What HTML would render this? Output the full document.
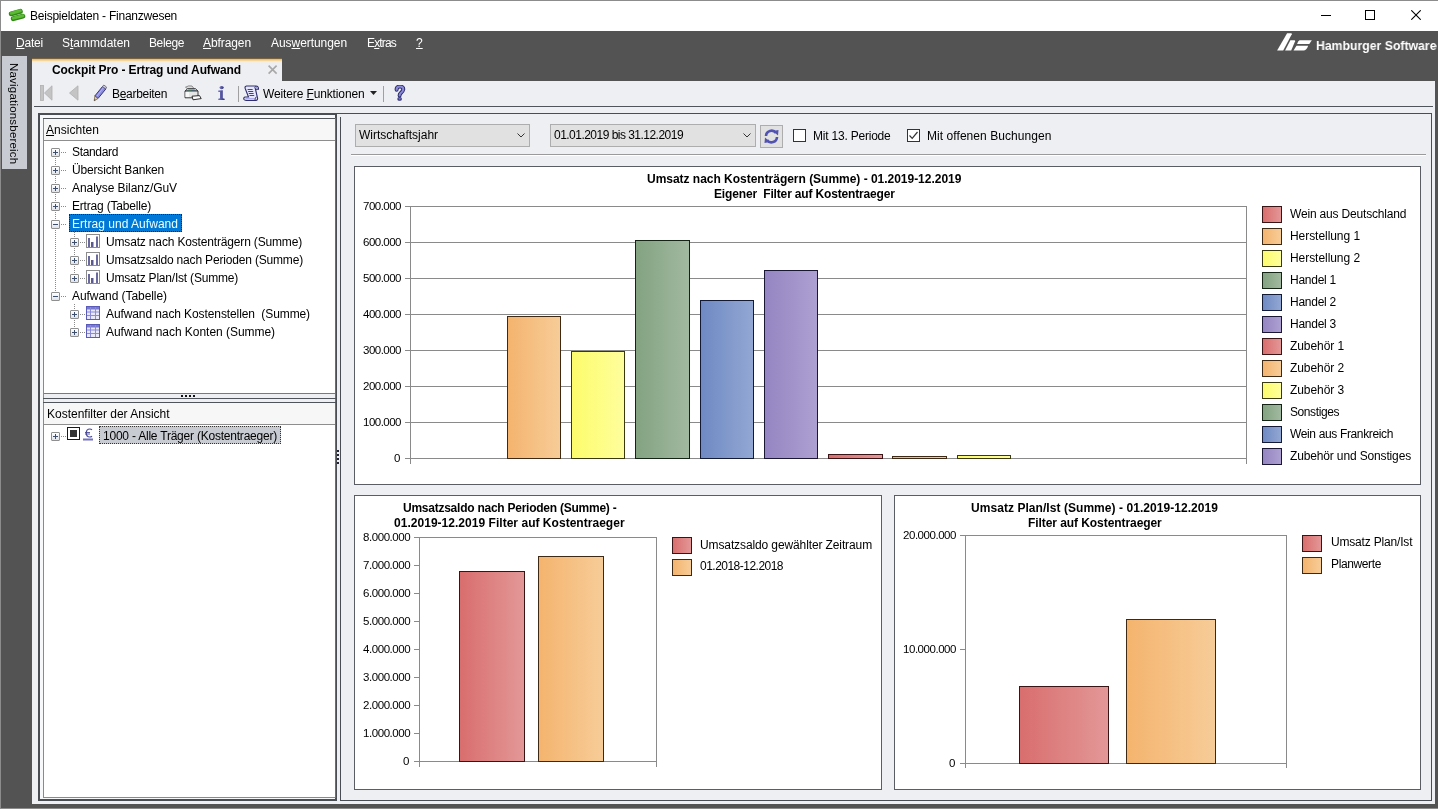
<!DOCTYPE html><html><head><meta charset="utf-8"><style>
*{margin:0;padding:0;box-sizing:border-box}
html,body{width:1438px;height:809px;overflow:hidden;background:#535353;font-family:"Liberation Sans",sans-serif}
div,svg{position:absolute}
.t{white-space:pre;will-change:transform}
u{text-decoration:underline;text-underline-offset:1px}
</style></head><body>
<div style="left:0px;top:0px;width:1438px;height:809px;background:#535353;"></div>
<div style="left:0px;top:0px;width:1438px;height:31px;background:#ffffff;"></div>
<div style="left:0px;top:0px;width:1438px;height:1px;background:#8c8c8c;"></div>
<div style="left:0px;top:0px;width:1px;height:809px;background:#8c8c8c;"></div>
<div style="left:0px;top:808px;width:1438px;height:1px;background:#8c8c8c;"></div>
<svg style="left:4px;top:4px" width="24" height="20" viewBox="0 0 24 20"><path d="M7.3 9.8 L16.3 7.3" stroke="#2f8a14" stroke-width="5" stroke-linecap="round"/><path d="M7.3 9.3 L16.3 6.8" stroke="#5cba34" stroke-width="3" stroke-linecap="round"/><path d="M9.3 14.6 L18.8 12.2" stroke="#2f8a14" stroke-width="5" stroke-linecap="round"/><path d="M9.3 14.1 L18.8 11.7" stroke="#5cba34" stroke-width="3" stroke-linecap="round"/></svg>
<div class="t" style="left:30.00px;top:10.04px;font-size:12px;line-height:12px;color:#000;letter-spacing:-0.237px;">Beispieldaten - Finanzwesen</div>
<div style="left:1321px;top:15px;width:10px;height:1px;background:#000;"></div>
<div style="left:1365px;top:10px;width:10px;height:10px;border:1px solid #000"></div>
<svg style="left:1411px;top:10px" width="10" height="10" viewBox="0 0 10 10"><path d="M0.3 0.3L9.7 9.7M9.7 0.3L0.3 9.7" stroke="#000" stroke-width="1.1"/></svg>
<div class="t" style="left:16.00px;top:36.64px;font-size:12px;line-height:12px;color:#fff;letter-spacing:-0.202px;"><u>D</u>atei</div>
<div class="t" style="left:62.00px;top:36.64px;font-size:12px;line-height:12px;color:#fff;letter-spacing:-0.003px;">S<u>t</u>ammdaten</div>
<div class="t" style="left:149.00px;top:36.64px;font-size:12px;line-height:12px;color:#fff;letter-spacing:-0.394px;">Bele<u>g</u>e</div>
<div class="t" style="left:203.00px;top:36.64px;font-size:12px;line-height:12px;color:#fff;letter-spacing:-0.087px;"><u>A</u>bfragen</div>
<div class="t" style="left:271.00px;top:36.64px;font-size:12px;line-height:12px;color:#fff;letter-spacing:-0.059px;">Aus<u>w</u>ertungen</div>
<div class="t" style="left:367.00px;top:36.64px;font-size:12px;line-height:12px;color:#fff;letter-spacing:-0.834px;">E<u>x</u>tras</div>
<div class="t" style="left:416.00px;top:36.64px;font-size:12px;line-height:12px;color:#fff;"><u>?</u></div>
<svg style="left:1274px;top:31px" width="40" height="22" viewBox="0 0 40 22"><path d="M3.1 19.5 L9.2 19.5 L17.8 3.2 Q18.2 2.2 17 2.2 L13.1 2.2Z" fill="#fff"/><path d="M11.1 19.5 L17.2 19.5 L21.1 10.2 Q21.4 9.2 20.3 9.2 L16.4 9.2Z" fill="#fff"/><path d="M25.5 9.2 L37.8 9.2 L35.3 13.1 L23.1 13.1 Q24 9.5 25.5 9.2Z" fill="#fff"/><path d="M22.5 14.7 L34.2 14.7 Q32.5 19.5 29.5 19.5 L19.5 19.5Z" fill="#fff"/></svg>
<div class="t" style="left:1315.5px;top:38.8px;font-size:13px;line-height:13px;font-weight:bold;color:#fff;transform:scaleX(0.942);transform-origin:0 0">Hamburger Software</div>
<div style="left:2px;top:56px;width:25px;height:113px;background:#c8cbd2;"></div>
<div class="t" style="left:18.5px;top:62.5px;transform:rotate(90deg);transform-origin:0 0;font-size:11.5px;line-height:11.5px;color:#000;letter-spacing:0.2px">Navigationsbereich</div>
<div style="left:32px;top:81px;width:1403px;height:723px;background:#eeeff2;"></div>
<div style="left:32px;top:58px;width:250px;height:23px;background:linear-gradient(#7a6440 0 1px,#f1c26c 1px 2px,#f5d59a 2px 3px,#f6e9cf 3px 4px,#f1eee9 4px 5px,#eeeff2 6px)"></div>
<div class="t" style="left:51.50px;top:63.84px;font-size:12px;line-height:12px;color:#000;font-weight:bold;letter-spacing:-0.100px;">Cockpit Pro - Ertrag und Aufwand</div>
<svg style="left:268px;top:65px" width="10" height="10" viewBox="0 0 10 10"><path d="M0.6 0.6L8.6 8.6M8.6 0.6L0.6 8.6" stroke="#a8a8a8" stroke-width="1.6"/></svg>
<svg style="left:40px;top:85px" width="13" height="16" viewBox="0 0 13 16"><rect x="0.5" y="0.5" width="3" height="15" fill="#c4c4c4" stroke="#b0b0b0" stroke-width="0.8"/><path d="M12 0.8 L12 15.2 L4.5 8Z" fill="#c4c4c4" stroke="#b0b0b0" stroke-width="0.8"/></svg>
<svg style="left:68px;top:85px" width="11" height="16" viewBox="0 0 11 16"><path d="M10 0.8 L10 15.2 L1.5 8Z" fill="#c4c4c4" stroke="#b0b0b0" stroke-width="0.8"/></svg>
<svg style="left:93px;top:84px" width="14" height="18" viewBox="0 0 14 18"><path d="M9.5 2.5 L12.8 5 L5 14.5 L1.8 12Z" fill="#8c8ce0" stroke="#35357a" stroke-width="1"/><path d="M10.5 3.5 L4 12" stroke="#b4b4f4" stroke-width="1"/><path d="M9.5 2.5 L10.8 1 L13.5 3 L12.8 5Z" fill="#d8d4e0" stroke="#5a5a70" stroke-width="0.8"/><path d="M1.8 12 L5 14.5 L1.2 16.8Z" fill="#e0ccb0" stroke="#6a5a40" stroke-width="0.7"/><path d="M1.2 16.8 L1.6 15.3 L2.6 16Z" fill="#222"/></svg>
<div class="t" style="left:111.50px;top:87.84px;font-size:12px;line-height:12px;color:#000;letter-spacing:-0.304px;">B<u>e</u>arbeiten</div>
<svg style="left:184px;top:85px" width="18" height="16" viewBox="0 0 18 16"><path d="M1.5 2.2 Q4.5 0.2 8 1 L10 3.5 L3.5 3.8Z" fill="#dcdcdc" stroke="#666" stroke-width="0.7"/><path d="M1 6 L3.5 3.5 L11.5 3.5 L14 6Z" fill="#b8ccd8" stroke="#3a3a3a" stroke-width="0.8"/><path d="M4.5 4.4 L10.5 4.4 L11.5 5.4 L4 5.4Z" fill="#4a86b8"/><path d="M4.5 4.6 L7.5 4.6 L7.3 5.4 L4.2 5.4Z" fill="#66cc66"/><path d="M1 6 L14 6 L14 12.8 L1 12.8Z" fill="#e6e6e6" stroke="#2a2a2a" stroke-width="0.9"/><path d="M1.5 7 L5 7 L5 12 L1.5 12Z" fill="#f8f8f8"/><path d="M8 11.2 L15.5 10.6 L17.2 13.6 L9 14.8Z" fill="#fdfdfd" stroke="#1a1a1a" stroke-width="0.9"/></svg>
<svg style="left:217px;top:85px" width="9" height="16" viewBox="0 0 9 16"><defs><linearGradient id="gi" x1="0" x2="1"><stop offset="0" stop-color="#7a7ac8"/><stop offset="1" stop-color="#303078"/></linearGradient></defs><ellipse cx="4.6" cy="2.6" rx="2.1" ry="1.7" fill="url(#gi)"/><path d="M1.2 5.5 L5.8 5.2 L5.8 13.3 L7.6 13.8 L7.6 15 L1.2 15 L1.2 13.8 L3 13.3 L3 7 L1.2 7Z" fill="url(#gi)"/></svg>
<div style="left:238px;top:86px;width:1px;height:16px;background:#a0a0a0;"></div>
<svg style="left:243px;top:85px" width="16" height="16" viewBox="0 0 16 16"><path d="M3.5 1 Q1.5 1.5 2.2 3.5 L5.5 12 L2 12 Q0.2 12.8 1 14.5 Q1.8 15.5 4 15.5 L13 15.5 Q15 15 14.5 13 L12.5 4.2 L15.5 4.2 Q15.5 1 13 1 Z" fill="#e6e6fc" stroke="#2e2e70" stroke-width="1.1"/><path d="M12.5 1.2 Q11.3 2.5 12.5 4.2" stroke="#2e2e70" stroke-width="1" fill="none"/><path d="M13 2.6 H15" stroke="#9a9ae6" stroke-width="1.2"/><path d="M13.5 12 Q11.5 12.5 12 15.2" stroke="#2e2e70" stroke-width="1" fill="none"/><path d="M4.6 4.5H9.6M5.2 6.5H10.2M5.8 8.5H10.6M6.5 10.5H11.2" stroke="#4040a0" stroke-width="1.1"/><path d="M2.5 13.8 H11" stroke="#a0a0ea" stroke-width="1.2"/></svg>
<div class="t" style="left:262.50px;top:87.84px;font-size:12px;line-height:12px;color:#000;letter-spacing:-0.129px;">Weitere <u>F</u>unktionen</div>
<svg style="left:370px;top:91px" width="7" height="4" viewBox="0 0 7 4"><path d="M0 0L7 0L3.5 4Z" fill="#222"/></svg>
<div style="left:383px;top:86px;width:1px;height:16px;background:#a0a0a0;"></div>
<svg style="left:394px;top:85px" width="12" height="17" viewBox="0 0 12 17"><path d="M2.6 4.8 Q2.6 1.6 6 1.6 Q9.6 1.6 9.2 4.6 Q8.9 6.6 6.8 8 Q5.6 8.9 5.6 10.6" stroke="#2c2c6a" stroke-width="4" fill="none" stroke-linecap="round"/><path d="M2.6 4.8 Q2.6 1.6 6 1.6 Q9.6 1.6 9.2 4.6 Q8.9 6.6 6.8 8 Q5.6 8.9 5.6 10.6" stroke="#8a8ad8" stroke-width="2" fill="none" stroke-linecap="round"/><ellipse cx="5.6" cy="13.9" rx="2.3" ry="1.9" fill="#2c2c6a"/><ellipse cx="5.6" cy="13.7" rx="1.3" ry="1" fill="#7474c4"/></svg>
<div style="left:34px;top:106px;width:1399px;height:1px;background:#50555c;"></div>
<div style="left:38px;top:113px;width:299px;height:688px;background:#4a4e54;"></div>
<div style="left:40px;top:115px;width:295px;height:684px;background:#f7f8fa;"></div>
<div style="left:43px;top:118px;width:293px;height:680px;background:#8a8a8a;"></div>
<div style="left:44px;top:119px;width:291px;height:678px;background:#ffffff;"></div>
<div style="left:43px;top:118px;width:293px;height:1px;background:#50555c;"></div>
<div style="left:335px;top:118px;width:1px;height:680px;background:#6a6e74;"></div>
<div style="left:44px;top:119px;width:291px;height:21px;background:#f7f7f7;"></div>
<div style="left:44px;top:140px;width:291px;height:1px;background:#8e8e8e;"></div>
<div class="t" style="left:46.00px;top:123.84px;font-size:12px;line-height:12px;color:#000;letter-spacing:0.034px;"><u>A</u>nsichten</div>
<div style="left:55px;top:158px;width:1px;height:134px;background:repeating-linear-gradient(180deg,#8a8a8a 0 1px,transparent 1px 2px)"></div>
<div style="left:51px;top:148px;width:9px;height:9px;border:1px solid #8f8f8f;border-radius:1px;background:linear-gradient(#ffffff,#dfe3ea)"></div>
<div style="left:53px;top:152px;width:5px;height:1px;background:#3e4f6e"></div>
<div style="left:55px;top:150px;width:1px;height:5px;background:#3e4f6e"></div>
<div style="left:61px;top:152px;width:6px;height:1px;background:repeating-linear-gradient(90deg,#8a8a8a 0 1px,transparent 1px 2px)"></div>
<div class="t" style="left:72.00px;top:145.84px;font-size:12px;line-height:12px;color:#000;letter-spacing:-0.337px;">Standard</div>
<div style="left:51px;top:166px;width:9px;height:9px;border:1px solid #8f8f8f;border-radius:1px;background:linear-gradient(#ffffff,#dfe3ea)"></div>
<div style="left:53px;top:170px;width:5px;height:1px;background:#3e4f6e"></div>
<div style="left:55px;top:168px;width:1px;height:5px;background:#3e4f6e"></div>
<div style="left:61px;top:170px;width:6px;height:1px;background:repeating-linear-gradient(90deg,#8a8a8a 0 1px,transparent 1px 2px)"></div>
<div class="t" style="left:72.00px;top:163.84px;font-size:12px;line-height:12px;color:#000;letter-spacing:-0.169px;">Übersicht Banken</div>
<div style="left:51px;top:184px;width:9px;height:9px;border:1px solid #8f8f8f;border-radius:1px;background:linear-gradient(#ffffff,#dfe3ea)"></div>
<div style="left:53px;top:188px;width:5px;height:1px;background:#3e4f6e"></div>
<div style="left:55px;top:186px;width:1px;height:5px;background:#3e4f6e"></div>
<div style="left:61px;top:188px;width:6px;height:1px;background:repeating-linear-gradient(90deg,#8a8a8a 0 1px,transparent 1px 2px)"></div>
<div class="t" style="left:72.00px;top:181.84px;font-size:12px;line-height:12px;color:#000;letter-spacing:-0.058px;">Analyse Bilanz/GuV</div>
<div style="left:51px;top:202px;width:9px;height:9px;border:1px solid #8f8f8f;border-radius:1px;background:linear-gradient(#ffffff,#dfe3ea)"></div>
<div style="left:53px;top:206px;width:5px;height:1px;background:#3e4f6e"></div>
<div style="left:55px;top:204px;width:1px;height:5px;background:#3e4f6e"></div>
<div style="left:61px;top:206px;width:6px;height:1px;background:repeating-linear-gradient(90deg,#8a8a8a 0 1px,transparent 1px 2px)"></div>
<div class="t" style="left:72.00px;top:199.84px;font-size:12px;line-height:12px;color:#000;letter-spacing:-0.189px;">Ertrag (Tabelle)</div>
<div style="left:51px;top:220px;width:9px;height:9px;border:1px solid #8f8f8f;border-radius:1px;background:linear-gradient(#ffffff,#dfe3ea)"></div>
<div style="left:53px;top:224px;width:5px;height:1px;background:#3e4f6e"></div>
<div style="left:61px;top:224px;width:6px;height:1px;background:repeating-linear-gradient(90deg,#8a8a8a 0 1px,transparent 1px 2px)"></div>
<div style="left:69px;top:214px;width:113px;height:18px;background:#0078d7;outline:1px dotted #0a2a50;outline-offset:-1px"></div>
<div class="t" style="left:72.00px;top:217.84px;font-size:12px;line-height:12px;color:#e8ffff;letter-spacing:0.033px;">Ertrag und Aufwand</div>
<div style="left:74px;top:232px;width:1px;height:50px;background:repeating-linear-gradient(180deg,#8a8a8a 0 1px,transparent 1px 2px)"></div>
<div style="left:70px;top:238px;width:9px;height:9px;border:1px solid #8f8f8f;border-radius:1px;background:linear-gradient(#ffffff,#dfe3ea)"></div>
<div style="left:72px;top:242px;width:5px;height:1px;background:#3e4f6e"></div>
<div style="left:74px;top:240px;width:1px;height:5px;background:#3e4f6e"></div>
<div style="left:80px;top:242px;width:5px;height:1px;background:repeating-linear-gradient(90deg,#8a8a8a 0 1px,transparent 1px 2px)"></div>
<svg style="left:86px;top:234px" width="14" height="14" viewBox="0 0 14 14"><rect x="0.5" y="0.5" width="13" height="13" fill="#fff" stroke="#8c8c8c"/><rect x="2" y="4" width="2" height="9" fill="#6a6a9e"/><rect x="5" y="8" width="2.5" height="5" fill="#5a5a90"/><rect x="10" y="2.5" width="2" height="10.5" fill="#6a6a9e"/></svg>
<div class="t" style="left:105.50px;top:235.84px;font-size:12px;line-height:12px;color:#000;letter-spacing:-0.164px;">Umsatz nach Kostenträgern (Summe)</div>
<div style="left:70px;top:256px;width:9px;height:9px;border:1px solid #8f8f8f;border-radius:1px;background:linear-gradient(#ffffff,#dfe3ea)"></div>
<div style="left:72px;top:260px;width:5px;height:1px;background:#3e4f6e"></div>
<div style="left:74px;top:258px;width:1px;height:5px;background:#3e4f6e"></div>
<div style="left:80px;top:260px;width:5px;height:1px;background:repeating-linear-gradient(90deg,#8a8a8a 0 1px,transparent 1px 2px)"></div>
<svg style="left:86px;top:252px" width="14" height="14" viewBox="0 0 14 14"><rect x="0.5" y="0.5" width="13" height="13" fill="#fff" stroke="#8c8c8c"/><rect x="2" y="4" width="2" height="9" fill="#6a6a9e"/><rect x="5" y="8" width="2.5" height="5" fill="#5a5a90"/><rect x="10" y="2.5" width="2" height="10.5" fill="#6a6a9e"/></svg>
<div class="t" style="left:105.50px;top:253.84px;font-size:12px;line-height:12px;color:#000;letter-spacing:-0.174px;">Umsatzsaldo nach Perioden (Summe)</div>
<div style="left:70px;top:274px;width:9px;height:9px;border:1px solid #8f8f8f;border-radius:1px;background:linear-gradient(#ffffff,#dfe3ea)"></div>
<div style="left:72px;top:278px;width:5px;height:1px;background:#3e4f6e"></div>
<div style="left:74px;top:276px;width:1px;height:5px;background:#3e4f6e"></div>
<div style="left:80px;top:278px;width:5px;height:1px;background:repeating-linear-gradient(90deg,#8a8a8a 0 1px,transparent 1px 2px)"></div>
<svg style="left:86px;top:270px" width="14" height="14" viewBox="0 0 14 14"><rect x="0.5" y="0.5" width="13" height="13" fill="#fff" stroke="#8c8c8c"/><rect x="2" y="4" width="2" height="9" fill="#6a6a9e"/><rect x="5" y="8" width="2.5" height="5" fill="#5a5a90"/><rect x="10" y="2.5" width="2" height="10.5" fill="#6a6a9e"/></svg>
<div class="t" style="left:105.50px;top:271.84px;font-size:12px;line-height:12px;color:#000;letter-spacing:-0.204px;">Umsatz Plan/Ist (Summe)</div>
<div style="left:51px;top:292px;width:9px;height:9px;border:1px solid #8f8f8f;border-radius:1px;background:linear-gradient(#ffffff,#dfe3ea)"></div>
<div style="left:53px;top:296px;width:5px;height:1px;background:#3e4f6e"></div>
<div style="left:61px;top:296px;width:6px;height:1px;background:repeating-linear-gradient(90deg,#8a8a8a 0 1px,transparent 1px 2px)"></div>
<div class="t" style="left:72.00px;top:289.84px;font-size:12px;line-height:12px;color:#000;letter-spacing:-0.062px;">Aufwand (Tabelle)</div>
<div style="left:74px;top:304px;width:1px;height:24px;background:repeating-linear-gradient(180deg,#8a8a8a 0 1px,transparent 1px 2px)"></div>
<div style="left:70px;top:310px;width:9px;height:9px;border:1px solid #8f8f8f;border-radius:1px;background:linear-gradient(#ffffff,#dfe3ea)"></div>
<div style="left:72px;top:314px;width:5px;height:1px;background:#3e4f6e"></div>
<div style="left:74px;top:312px;width:1px;height:5px;background:#3e4f6e"></div>
<div style="left:80px;top:314px;width:5px;height:1px;background:repeating-linear-gradient(90deg,#8a8a8a 0 1px,transparent 1px 2px)"></div>
<svg style="left:86px;top:306px" width="14" height="14" viewBox="0 0 14 14"><rect x="0.5" y="0.5" width="13" height="13" fill="#e8e8fa" stroke="#5a5ab8"/><rect x="1" y="1" width="12" height="2.5" fill="#7a7ad0"/><path d="M4.5 1V13M9.5 1V13M1 6H13M1 9.5H13" stroke="#8a8ad8" stroke-width="1"/></svg>
<div class="t" style="left:105.50px;top:307.84px;font-size:12px;line-height:12px;color:#000;letter-spacing:-0.098px;">Aufwand nach Kostenstellen  (Summe)</div>
<div style="left:70px;top:328px;width:9px;height:9px;border:1px solid #8f8f8f;border-radius:1px;background:linear-gradient(#ffffff,#dfe3ea)"></div>
<div style="left:72px;top:332px;width:5px;height:1px;background:#3e4f6e"></div>
<div style="left:74px;top:330px;width:1px;height:5px;background:#3e4f6e"></div>
<div style="left:80px;top:332px;width:5px;height:1px;background:repeating-linear-gradient(90deg,#8a8a8a 0 1px,transparent 1px 2px)"></div>
<svg style="left:86px;top:324px" width="14" height="14" viewBox="0 0 14 14"><rect x="0.5" y="0.5" width="13" height="13" fill="#e8e8fa" stroke="#5a5ab8"/><rect x="1" y="1" width="12" height="2.5" fill="#7a7ad0"/><path d="M4.5 1V13M9.5 1V13M1 6H13M1 9.5H13" stroke="#8a8ad8" stroke-width="1"/></svg>
<div class="t" style="left:105.50px;top:325.84px;font-size:12px;line-height:12px;color:#000;letter-spacing:-0.040px;">Aufwand nach Konten (Summe)</div>
<div style="left:44px;top:393px;width:291px;height:1px;background:#7a7a7a;"></div>
<div style="left:44px;top:394px;width:291px;height:8px;background:#eeeff2;"></div>
<div style="left:181px;top:395px;width:2px;height:2px;background:#111;"></div>
<div style="left:185px;top:395px;width:2px;height:2px;background:#111;"></div>
<div style="left:189px;top:395px;width:2px;height:2px;background:#111;"></div>
<div style="left:193px;top:395px;width:2px;height:2px;background:#111;"></div>
<div style="left:43px;top:398px;width:293px;height:1px;background:#50555c;"></div>
<div style="left:43px;top:402px;width:293px;height:1px;background:#50555c;"></div>
<div style="left:44px;top:403px;width:291px;height:21px;background:#f7f7f7;"></div>
<div style="left:44px;top:424px;width:291px;height:1px;background:#8e8e8e;"></div>
<div class="t" style="left:46.50px;top:407.84px;font-size:12px;line-height:12px;color:#000;letter-spacing:-0.009px;">Kostenfilter der Ansicht</div>
<div style="left:51px;top:432px;width:9px;height:9px;border:1px solid #8f8f8f;border-radius:1px;background:linear-gradient(#ffffff,#dfe3ea)"></div>
<div style="left:53px;top:436px;width:5px;height:1px;background:#3e4f6e"></div>
<div style="left:55px;top:434px;width:1px;height:5px;background:#3e4f6e"></div>
<div style="left:61px;top:436px;width:5px;height:1px;background:repeating-linear-gradient(90deg,#8a8a8a 0 1px,transparent 1px 2px)"></div>
<div style="left:67px;top:427px;width:13px;height:13px;border:1.5px solid #1a1a1a;background:#fff"></div>
<div style="left:70px;top:430px;width:7px;height:7px;background:#333;"></div>
<svg style="left:83px;top:428px" width="11" height="14" viewBox="0 0 11 14"><path d="M9 1.8 Q8 1 6.8 1 Q3.3 1 3.3 5 Q3.3 9 6.8 9 Q8 9 9 8.2" stroke="#4a4a96" stroke-width="1.2" fill="none"/><path d="M2 4.5H7M2 6H7" stroke="#4a4a96" stroke-width="0.9"/><rect x="0" y="10.5" width="10" height="2" fill="#7272c0"/></svg>
<div style="left:99px;top:426px;width:182px;height:18px;background:#c8cbd1;outline:1px dotted #333;outline-offset:-1px"></div>
<div class="t" style="left:102.50px;top:430.34px;font-size:12px;line-height:12px;color:#000;letter-spacing:-0.218px;">1000 - Alle Träger (Kostentraeger)</div>
<div style="left:337px;top:450px;width:2px;height:2px;background:#223;"></div>
<div style="left:337px;top:454px;width:2px;height:2px;background:#223;"></div>
<div style="left:337px;top:458px;width:2px;height:2px;background:#223;"></div>
<div style="left:337px;top:462px;width:2px;height:2px;background:#223;"></div>
<div style="left:337px;top:113px;width:1095px;height:1px;background:#4a4e54;"></div>
<div style="left:340px;top:117px;width:1px;height:684px;background:#4a4e54;"></div>
<div style="left:1431px;top:113px;width:1px;height:688px;background:#4a4e54;"></div>
<div style="left:340px;top:800px;width:1092px;height:1px;background:#4a4e54;"></div>
<div style="left:38px;top:800px;width:299px;height:1px;background:#4a4e54;"></div>
<div style="left:355px;top:124px;width:175px;height:23px;background:#e1e1e1;border:1px solid #adadad"></div>
<div class="t" style="left:359.00px;top:129.34px;font-size:12px;line-height:12px;color:#000;letter-spacing:-0.023px;">Wirtschaftsjahr</div>
<svg style="left:517px;top:133px" width="8" height="5" viewBox="0 0 8 5"><path d="M0.5 0.5L4 4L7.5 0.5" stroke="#333" stroke-width="1" fill="none"/></svg>
<div style="left:550px;top:124px;width:206px;height:23px;background:#e1e1e1;border:1px solid #adadad"></div>
<div class="t" style="left:554.00px;top:129.34px;font-size:12px;line-height:12px;color:#000;letter-spacing:-0.524px;">01.01.2019 bis 31.12.2019</div>
<svg style="left:743px;top:133px" width="8" height="5" viewBox="0 0 8 5"><path d="M0.5 0.5L4 4L7.5 0.5" stroke="#333" stroke-width="1" fill="none"/></svg>
<div style="left:760px;top:125px;width:23px;height:23px;background:#e1e1e1;border:1px solid #adadad"></div>
<svg style="left:763px;top:128px" width="17" height="17" viewBox="0 0 17 17"><path d="M3 8 A5.5 5.5 0 0 1 13 5" stroke="#5252b0" stroke-width="2.6" fill="none"/><path d="M14 9 A5.5 5.5 0 0 1 4 12" stroke="#5252b0" stroke-width="2.6" fill="none"/><path d="M10 3 L15.5 2 L15 7.5Z" fill="#5252b0"/><path d="M7 14 L1.5 15 L2 9.5Z" fill="#5252b0"/></svg>
<div style="left:793px;top:129px;width:13px;height:13px;border:1px solid #333;background:#fff"></div>
<div class="t" style="left:812.50px;top:129.84px;font-size:12px;line-height:12px;color:#000;letter-spacing:-0.213px;">Mit 13. Periode</div>
<div style="left:907px;top:129px;width:13px;height:13px;border:1px solid #333;background:#fff"></div>
<svg style="left:908px;top:130px" width="11" height="11" viewBox="0 0 11 11"><path d="M1.5 5.5L4.2 8.3L9.5 2" stroke="#333" stroke-width="1.2" fill="none"/></svg>
<div class="t" style="left:926.50px;top:129.84px;font-size:12px;line-height:12px;color:#000;letter-spacing:0.062px;">Mit offenen Buchungen</div>
<div style="left:351px;top:154px;width:1075px;height:1px;background:#9a9a9a;"></div>
<div style="left:351px;top:155px;width:1075px;height:1px;background:#ffffff;"></div>
<div style="left:354px;top:166px;width:1067px;height:319px;background:#fff;border:1px solid #5a5e64"></div>
<div class="t" style="left:646.65px;top:172.84px;font-size:12px;line-height:12px;color:#000;font-weight:bold;letter-spacing:-0.022px;">Umsatz nach Kostenträgern (Summe) - 01.2019-12.2019</div>
<div class="t" style="left:713.50px;top:187.64px;font-size:12px;line-height:12px;color:#000;font-weight:bold;letter-spacing:-0.159px;">Eigener  Filter auf Kostentraeger</div>
<div style="left:405px;top:206px;width:841px;height:1px;background:#8a8a8a;"></div>
<div class="t" style="left:362.80px;top:200.97px;font-size:11.5px;line-height:11.5px;color:#000;letter-spacing:-0.509px;">700.000</div>
<div style="left:405px;top:242px;width:841px;height:1px;background:#8a8a8a;"></div>
<div class="t" style="left:362.80px;top:236.97px;font-size:11.5px;line-height:11.5px;color:#000;letter-spacing:-0.509px;">600.000</div>
<div style="left:405px;top:278px;width:841px;height:1px;background:#8a8a8a;"></div>
<div class="t" style="left:362.80px;top:272.97px;font-size:11.5px;line-height:11.5px;color:#000;letter-spacing:-0.509px;">500.000</div>
<div style="left:405px;top:314px;width:841px;height:1px;background:#8a8a8a;"></div>
<div class="t" style="left:362.80px;top:308.97px;font-size:11.5px;line-height:11.5px;color:#000;letter-spacing:-0.509px;">400.000</div>
<div style="left:405px;top:350px;width:841px;height:1px;background:#8a8a8a;"></div>
<div class="t" style="left:362.80px;top:344.97px;font-size:11.5px;line-height:11.5px;color:#000;letter-spacing:-0.509px;">300.000</div>
<div style="left:405px;top:386px;width:841px;height:1px;background:#8a8a8a;"></div>
<div class="t" style="left:362.80px;top:380.97px;font-size:11.5px;line-height:11.5px;color:#000;letter-spacing:-0.509px;">200.000</div>
<div style="left:405px;top:422px;width:841px;height:1px;background:#8a8a8a;"></div>
<div class="t" style="left:362.80px;top:416.97px;font-size:11.5px;line-height:11.5px;color:#000;letter-spacing:-0.509px;">100.000</div>
<div style="left:405px;top:458px;width:841px;height:1px;background:#8a8a8a;"></div>
<div class="t" style="left:394.40px;top:452.97px;font-size:11.5px;line-height:11.5px;color:#000;">0</div>
<div style="left:410px;top:206px;width:1px;height:258px;background:#8a8a8a;"></div>
<div style="left:1246px;top:206px;width:1px;height:258px;background:#8a8a8a;"></div>
<div style="left:507px;top:316px;width:54px;height:143px;background:linear-gradient(90deg,#f4b46e,#f7cc98);border:1px solid #3e2a14"></div>
<div style="left:571px;top:351px;width:54px;height:108px;background:linear-gradient(90deg,#fdfc6c,#fefe9c);border:1px solid #3a3a12"></div>
<div style="left:635px;top:240px;width:55px;height:219px;background:linear-gradient(90deg,#83a381,#a1b9a0);border:1px solid #142414"></div>
<div style="left:700px;top:300px;width:54px;height:159px;background:linear-gradient(90deg,#6f8ac3,#92a7d3);border:1px solid #121a36"></div>
<div style="left:764px;top:270px;width:54px;height:189px;background:linear-gradient(90deg,#9585c2,#ada0d1);border:1px solid #1a1636"></div>
<div style="left:828px;top:454px;width:55px;height:5px;background:linear-gradient(90deg,#d96e6e,#e39797);border:1px solid #3a1414"></div>
<div style="left:892px;top:456px;width:55px;height:3px;background:linear-gradient(90deg,#f4b46e,#f7cc98);border:1px solid #3e2a14"></div>
<div style="left:957px;top:455px;width:54px;height:4px;background:linear-gradient(90deg,#fdfc6c,#fefe9c);border:1px solid #3a3a12"></div>
<div style="left:1262px;top:206px;width:20px;height:17px;background:linear-gradient(90deg,#d96e6e,#e39797);border:1px solid #3a1414"></div>
<div class="t" style="left:1290.30px;top:207.54px;font-size:12px;line-height:12px;color:#000;letter-spacing:-0.177px;">Wein aus Deutschland</div>
<div style="left:1262px;top:228px;width:20px;height:17px;background:linear-gradient(90deg,#f4b46e,#f7cc98);border:1px solid #3e2a14"></div>
<div class="t" style="left:1290.30px;top:229.54px;font-size:12px;line-height:12px;color:#000;letter-spacing:-0.054px;">Herstellung 1</div>
<div style="left:1262px;top:250px;width:20px;height:17px;background:linear-gradient(90deg,#fdfc6c,#fefe9c);border:1px solid #3a3a12"></div>
<div class="t" style="left:1290.30px;top:251.54px;font-size:12px;line-height:12px;color:#000;letter-spacing:-0.054px;">Herstellung 2</div>
<div style="left:1262px;top:272px;width:20px;height:17px;background:linear-gradient(90deg,#83a381,#a1b9a0);border:1px solid #142414"></div>
<div class="t" style="left:1290.30px;top:273.54px;font-size:12px;line-height:12px;color:#000;letter-spacing:-0.254px;">Handel 1</div>
<div style="left:1262px;top:294px;width:20px;height:17px;background:linear-gradient(90deg,#6f8ac3,#92a7d3);border:1px solid #121a36"></div>
<div class="t" style="left:1290.30px;top:295.54px;font-size:12px;line-height:12px;color:#000;letter-spacing:-0.254px;">Handel 2</div>
<div style="left:1262px;top:316px;width:20px;height:17px;background:linear-gradient(90deg,#9585c2,#ada0d1);border:1px solid #1a1636"></div>
<div class="t" style="left:1290.30px;top:317.54px;font-size:12px;line-height:12px;color:#000;letter-spacing:-0.254px;">Handel 3</div>
<div style="left:1262px;top:338px;width:20px;height:17px;background:linear-gradient(90deg,#d96e6e,#e39797);border:1px solid #3a1414"></div>
<div class="t" style="left:1290.30px;top:339.54px;font-size:12px;line-height:12px;color:#000;letter-spacing:-0.077px;">Zubehör 1</div>
<div style="left:1262px;top:360px;width:20px;height:17px;background:linear-gradient(90deg,#f4b46e,#f7cc98);border:1px solid #3e2a14"></div>
<div class="t" style="left:1290.30px;top:361.54px;font-size:12px;line-height:12px;color:#000;letter-spacing:-0.077px;">Zubehör 2</div>
<div style="left:1262px;top:382px;width:20px;height:17px;background:linear-gradient(90deg,#fdfc6c,#fefe9c);border:1px solid #3a3a12"></div>
<div class="t" style="left:1290.30px;top:383.54px;font-size:12px;line-height:12px;color:#000;letter-spacing:-0.077px;">Zubehör 3</div>
<div style="left:1262px;top:404px;width:20px;height:17px;background:linear-gradient(90deg,#83a381,#a1b9a0);border:1px solid #142414"></div>
<div class="t" style="left:1290.30px;top:405.54px;font-size:12px;line-height:12px;color:#000;letter-spacing:-0.411px;">Sonstiges</div>
<div style="left:1262px;top:426px;width:20px;height:17px;background:linear-gradient(90deg,#6f8ac3,#92a7d3);border:1px solid #121a36"></div>
<div class="t" style="left:1290.30px;top:427.54px;font-size:12px;line-height:12px;color:#000;letter-spacing:-0.359px;">Wein aus Frankreich</div>
<div style="left:1262px;top:448px;width:20px;height:17px;background:linear-gradient(90deg,#9585c2,#ada0d1);border:1px solid #1a1636"></div>
<div class="t" style="left:1290.30px;top:449.54px;font-size:12px;line-height:12px;color:#000;letter-spacing:-0.146px;">Zubehör und Sonstiges</div>
<div style="left:354px;top:495px;width:528px;height:295px;background:#fff;border:1px solid #5a5e64"></div>
<div class="t" style="left:402.80px;top:502.14px;font-size:12px;line-height:12px;color:#000;font-weight:bold;letter-spacing:-0.247px;">Umsatzsaldo nach Perioden (Summe) -</div>
<div class="t" style="left:393.60px;top:516.54px;font-size:12px;line-height:12px;color:#000;font-weight:bold;letter-spacing:0.029px;">01.2019-12.2019 Filter auf Kostentraeger</div>
<div style="left:419px;top:537px;width:238px;height:225px;border:1px solid #8a8a8a;border-bottom:none"></div>
<div style="left:419px;top:761px;width:238px;height:1px;background:#8a8a8a;"></div>
<div style="left:419px;top:761px;width:1px;height:6px;background:#8a8a8a;"></div>
<div style="left:656px;top:761px;width:1px;height:6px;background:#8a8a8a;"></div>
<div style="left:414px;top:537px;width:5px;height:1px;background:#8a8a8a;"></div>
<div class="t" style="left:362.55px;top:531.97px;font-size:11.5px;line-height:11.5px;color:#000;letter-spacing:-0.434px;">8.000.000</div>
<div style="left:414px;top:565px;width:5px;height:1px;background:#8a8a8a;"></div>
<div class="t" style="left:362.55px;top:559.97px;font-size:11.5px;line-height:11.5px;color:#000;letter-spacing:-0.434px;">7.000.000</div>
<div style="left:414px;top:593px;width:5px;height:1px;background:#8a8a8a;"></div>
<div class="t" style="left:362.55px;top:587.97px;font-size:11.5px;line-height:11.5px;color:#000;letter-spacing:-0.434px;">6.000.000</div>
<div style="left:414px;top:621px;width:5px;height:1px;background:#8a8a8a;"></div>
<div class="t" style="left:362.55px;top:615.97px;font-size:11.5px;line-height:11.5px;color:#000;letter-spacing:-0.434px;">5.000.000</div>
<div style="left:414px;top:649px;width:5px;height:1px;background:#8a8a8a;"></div>
<div class="t" style="left:362.55px;top:643.97px;font-size:11.5px;line-height:11.5px;color:#000;letter-spacing:-0.434px;">4.000.000</div>
<div style="left:414px;top:677px;width:5px;height:1px;background:#8a8a8a;"></div>
<div class="t" style="left:362.55px;top:671.97px;font-size:11.5px;line-height:11.5px;color:#000;letter-spacing:-0.434px;">3.000.000</div>
<div style="left:414px;top:705px;width:5px;height:1px;background:#8a8a8a;"></div>
<div class="t" style="left:362.55px;top:699.97px;font-size:11.5px;line-height:11.5px;color:#000;letter-spacing:-0.434px;">2.000.000</div>
<div style="left:414px;top:733px;width:5px;height:1px;background:#8a8a8a;"></div>
<div class="t" style="left:362.55px;top:727.97px;font-size:11.5px;line-height:11.5px;color:#000;letter-spacing:-0.434px;">1.000.000</div>
<div style="left:414px;top:761px;width:5px;height:1px;background:#8a8a8a;"></div>
<div class="t" style="left:403.40px;top:755.97px;font-size:11.5px;line-height:11.5px;color:#000;">0</div>
<div style="left:459px;top:571px;width:66px;height:191px;background:linear-gradient(90deg,#d96e6e,#e39797);border:1px solid #3a1414"></div>
<div style="left:538px;top:556px;width:66px;height:206px;background:linear-gradient(90deg,#f4b46e,#f7cc98);border:1px solid #3e2a14"></div>
<div style="left:672px;top:537px;width:20px;height:17px;background:linear-gradient(90deg,#d96e6e,#e39797);border:1px solid #3a1414"></div>
<div class="t" style="left:700.30px;top:538.84px;font-size:12px;line-height:12px;color:#000;letter-spacing:-0.113px;">Umsatzsaldo gewählter Zeitraum</div>
<div style="left:672px;top:559px;width:20px;height:17px;background:linear-gradient(90deg,#f4b46e,#f7cc98);border:1px solid #3e2a14"></div>
<div class="t" style="left:700.30px;top:560.44px;font-size:12px;line-height:12px;color:#000;letter-spacing:-0.516px;">01.2018-12.2018</div>
<div style="left:894px;top:495px;width:527px;height:295px;background:#fff;border:1px solid #5a5e64"></div>
<div class="t" style="left:970.50px;top:501.84px;font-size:12px;line-height:12px;color:#000;font-weight:bold;letter-spacing:0.054px;">Umsatz Plan/Ist (Summe) - 01.2019-12.2019</div>
<div class="t" style="left:1028.45px;top:516.84px;font-size:12px;line-height:12px;color:#000;font-weight:bold;letter-spacing:-0.069px;">Filter auf Kostentraeger</div>
<div style="left:965px;top:535px;width:322px;height:229px;border:1px solid #8a8a8a;border-bottom:none"></div>
<div style="left:965px;top:763px;width:322px;height:1px;background:#8a8a8a;"></div>
<div style="left:965px;top:763px;width:1px;height:5px;background:#8a8a8a;"></div>
<div style="left:1286px;top:763px;width:1px;height:5px;background:#8a8a8a;"></div>
<div style="left:960px;top:535px;width:5px;height:1px;background:#8a8a8a;"></div>
<div class="t" style="left:902.80px;top:529.97px;font-size:11.5px;line-height:11.5px;color:#000;letter-spacing:-0.455px;">20.000.000</div>
<div style="left:960px;top:649px;width:5px;height:1px;background:#8a8a8a;"></div>
<div class="t" style="left:902.80px;top:643.97px;font-size:11.5px;line-height:11.5px;color:#000;letter-spacing:-0.455px;">10.000.000</div>
<div style="left:960px;top:763px;width:5px;height:1px;background:#8a8a8a;"></div>
<div class="t" style="left:949.40px;top:757.97px;font-size:11.5px;line-height:11.5px;color:#000;">0</div>
<div style="left:1019px;top:686px;width:90px;height:78px;background:linear-gradient(90deg,#d96e6e,#e39797);border:1px solid #3a1414"></div>
<div style="left:1126px;top:619px;width:90px;height:145px;background:linear-gradient(90deg,#f4b46e,#f7cc98);border:1px solid #3e2a14"></div>
<div style="left:1302px;top:535px;width:20px;height:17px;background:linear-gradient(90deg,#d96e6e,#e39797);border:1px solid #3a1414"></div>
<div class="t" style="left:1330.90px;top:536.44px;font-size:12px;line-height:12px;color:#000;letter-spacing:-0.181px;">Umsatz Plan/Ist</div>
<div style="left:1302px;top:557px;width:20px;height:17px;background:linear-gradient(90deg,#f4b46e,#f7cc98);border:1px solid #3e2a14"></div>
<div class="t" style="left:1330.90px;top:558.44px;font-size:12px;line-height:12px;color:#000;letter-spacing:-0.373px;">Planwerte</div>
</body></html>
